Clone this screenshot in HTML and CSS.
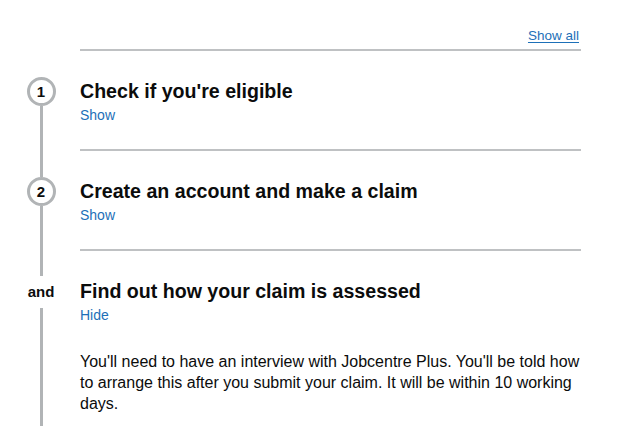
FILE: index.html
```html
<!DOCTYPE html>
<html lang="en">
<head>
<meta charset="utf-8">
<title>Step by step</title>
<link rel="stylesheet" href="styles.css">
</head>
<body>
<div class="page">
  <div class="controls">
    <a class="show-all" href="#">Show all</a>
  </div>
  <ol class="steps">
    <li class="step">
      <div class="rail">
        <span class="seg seg-top seg-none"></span>
        <span class="num">1</span>
        <span class="seg seg-fill"></span>
      </div>
      <div class="body">
        <h2 class="title">Check if you're eligible</h2>
        <a class="toggle" href="#">Show</a>
      </div>
    </li>
    <li class="step">
      <div class="rail">
        <span class="seg seg-top"></span>
        <span class="num">2</span>
        <span class="seg seg-fill"></span>
      </div>
      <div class="body">
        <h2 class="title">Create an account and make a claim</h2>
        <a class="toggle" href="#">Show</a>
      </div>
    </li>
    <li class="step step-open">
      <div class="rail">
        <span class="seg seg-and-top"></span>
        <span class="and">and</span>
        <span class="seg seg-fill"></span>
      </div>
      <div class="body">
        <h2 class="title">Find out how your claim is assessed</h2>
        <a class="toggle" href="#">Hide</a>
        <p class="text">You'll need to have an interview with Jobcentre Plus. You'll be told how to arrange this after you submit your claim. It will be within 10 working days.</p>
      </div>
    </li>
  </ol>
</div>
</body>
</html>
```
FILE: styles.css
```css
html, body {
  margin: 0;
  padding: 0;
  background: #ffffff;
}
body {
  font-family: "Liberation Sans", Arial, sans-serif;
  color: #0b0c0c;
  overflow: hidden;
}
.page {
  padding-right: 39px;
  height: 426px;
  display: flex;
  flex-direction: column;
}
.controls {
  margin-left: 80px;
  padding-top: 25px;
  padding-bottom: 3px;
  border-bottom: 2px solid #bfc1c3;
  text-align: right;
  line-height: 20px;
}
.show-all {
  margin-right: 2px;
  font-size: 13.5px;
  color: #1d70b8;
  text-decoration: underline;
  text-underline-offset: 2px;
}
.steps {
  list-style: none;
  margin: 0;
  padding: 0;
  flex: 1;
  display: flex;
  flex-direction: column;
}
.step {
  display: grid;
  grid-template-columns: 80px 1fr;
}
.step-open {
  flex: 1;
}
.rail {
  display: flex;
  flex-direction: column;
  align-items: center;
  padding-left: 2px;
}
.seg {
  width: 3px;
  background: #b1b4b6;
}
.seg-top {
  height: 26px;
}
.seg-none {
  background: transparent;
}
.seg-fill {
  flex: 1;
}
.seg-and-top {
  height: 25px;
}
.num {
  box-sizing: border-box;
  width: 29px;
  height: 29px;
  border: 3px solid #b1b4b6;
  border-radius: 50%;
  display: flex;
  align-items: center;
  justify-content: center;
  font-weight: 700;
  font-size: 15px;
  line-height: 1;
  background: #ffffff;
}
.and {
  font-weight: 700;
  font-size: 15px;
  line-height: 32px;
  height: 32px;
}
.body {
  padding-top: 28px;
  padding-bottom: 24px;
  border-bottom: 2px solid #bfc1c3;
}
.step-open .body {
  border-bottom: none;
}
.title {
  margin: 0;
  font-size: 19.6px;
  line-height: 25px;
  font-weight: 700;
}
.toggle {
  display: block;
  margin-top: 1px;
  font-size: 14px;
  line-height: 20px;
  color: #1d70b8;
  text-decoration: none;
}
.text {
  margin: 26px 0 0;
  font-size: 16px;
  line-height: 21px;
}
```
